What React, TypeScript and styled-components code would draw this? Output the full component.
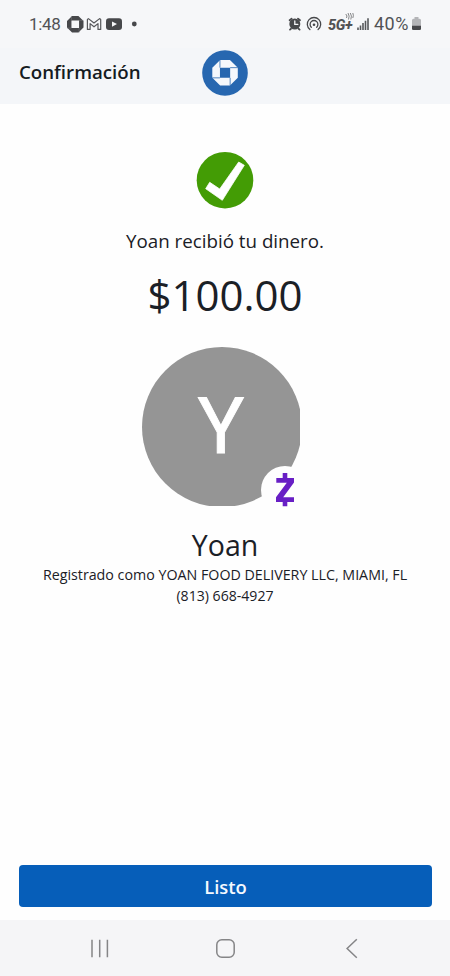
import React from 'react';
import styled, { createGlobalStyle } from 'styled-components';

const Global = createGlobalStyle`
  * { box-sizing: border-box; }
  body { margin: 0; background: #fff; }
  svg { display: block; flex: none; overflow: visible; }
`;

const Screen = styled.div`
  width: 450px;
  height: 976px;
  display: flex;
  flex-direction: column;
  background: #fefefe;
  color: #1b2026;
  font-family: 'Open Sans', 'Noto Sans', sans-serif;
  overflow: hidden;
`;

const StatusBar = styled.div`
  height: 48px;
  flex: none;
  display: flex;
  justify-content: space-between;
  padding: 0 28px 0 29px;
  background: #f6f7f9;
  color: #515255;
`;

const StatusGroup = styled.div`
  display: flex;
  align-items: center;
`;

const StatusText = styled.span<{ $size: number; $width: number; $spacing?: number }>`
  width: ${p => p.$width}px;
  font: 400 ${p => p.$size}px/20px Roboto, sans-serif;
  letter-spacing: ${p => p.$spacing ?? 0}px;
  white-space: nowrap;
`;

const NetworkLabel = styled.span`
  width: 28px;
  margin-left: 4px;
  padding-top: 4px;
  display: flex;
  font: italic 800 14.5px/18px Roboto, sans-serif;
  letter-spacing: -0.4px;
  position: relative;
`;

const Signal = styled.svg`
  position: absolute;
  left: 17px;
  top: 0;
`;

const Header = styled.header`
  height: 56px;
  flex: none;
  display: grid;
  grid-template-columns: 183px 46px 1fr;
  padding: 2px 0 0 19px;
  background: #f4f6f9;
`;

const Title = styled.h1`
  margin: 0;
  font-size: 18.7px;
  font-weight: 600;
  line-height: 43px;
  color: #151b22;
`;

const Main = styled.main`
  flex: 1;
  display: flex;
  flex-direction: column;
  align-items: center;
  padding-top: 48px;
`;

const Line = styled.div<{ $size: number; $height: number; $top?: number }>`
  margin-top: ${p => p.$top ?? 0}px;
  font-size: ${p => p.$size}px;
  line-height: ${p => p.$height}px;
  white-space: nowrap;
`;

const Avatar = styled.div`
  width: 158px;
  height: 159px;
  margin: 24px 8px 0 0;
  position: relative;
`;

const Disc = styled.div`
  width: 158px;
  height: 159px;
  overflow: hidden;
`;

const DiscFill = styled.div`
  width: 160px;
  height: 160px;
  padding-right: 2px;
  border-radius: 50%;
  background: #959595;
  color: #fff;
  text-align: center;
  font: 400 78px/160px Roboto, sans-serif;
  -webkit-text-stroke: 0.8px #fff;
`;

const Badge = styled.div`
  position: absolute;
  left: 119px;
  top: 119px;
  width: 48px;
  height: 48px;
  border-radius: 50%;
  background: #fefefe;
  display: flex;
  align-items: center;
  justify-content: center;
`;

const Footer = styled.div`
  flex: none;
  padding: 0 18px 13px 19px;
`;

const DoneButton = styled.button`
  display: block;
  width: 100%;
  height: 42px;
  padding: 0;
  border: 0;
  border-radius: 4px;
  background: #065eb9;
  color: #f4f9ff;
  font: 600 18.4px/43px 'Open Sans', sans-serif;
`;

const NavBar = styled.nav`
  height: 56px;
  flex: none;
  display: grid;
  grid-template-columns: 125px 130px 13px;
  padding: 18px 0 0 90px;
  background: #f5f5f7;
`;

// Four interlocking blocks around a square opening; each seam runs outward from one corner.
const Octagon = ({ size, fill, gap, inset }: { size: number; fill: string; gap: string; inset: number }) => {
  const a = inset;
  const b = 26 - inset;
  return (
    <svg width={size} height={size} viewBox="0 0 26 26">
      <path fill={fill} fillRule="evenodd" d={`M8 0H18L26 8V18L18 26H8L0 18V8ZM${a} ${a}V${b}H${b}V${a}Z`} />
      <path stroke={gap} strokeWidth="0.8" fill="none" d={`M${a} 0V${a}M${b} ${a}H26M${b} ${b}V26M0 ${b}H${a}`} />
    </svg>
  );
};

const BrandMark = () => (
  <svg width="46" height="46" viewBox="0 0 46 46">
    <circle cx="23" cy="23" r="22.8" fill="#2767b0" />
    <g transform="translate(10.3 10)">
      <Octagon size={25.5} fill="#f5f8fc" gap="#2767b0" inset={7.8} />
    </g>
  </svg>
);

export default function App() {
  return (
    <Screen>
      <Global />
      <StatusBar>
        <StatusGroup>
          <StatusText $size={17} $width={37.5} $spacing={-0.3}>1:48</StatusText>
          <Octagon size={16.5} fill="#47484b" gap="#77787b" inset={7} />
          <svg width="53" height="16" viewBox="0 0 53 16">
            <path d="M4.4 13.4V3.4L5.4 2.6L11 7L16.6 2.6L17.7 3.4V13.4H15V7.6L11 10.8L7.1 7.6V13.4Z" fill="none" stroke="#56575a" strokeWidth="1.2" strokeLinejoin="round" />
            <rect x="23" y="2.3" width="16" height="11.7" rx="3" fill="#47484b" />
            <path d="M29 5.4L34 8.1L29 10.8Z" fill="#f6f7f9" />
            <circle cx="51.3" cy="8" r="2.4" fill="#47484b" />
          </svg>
        </StatusGroup>
        <StatusGroup>
          <svg width="36" height="16" viewBox="0 0 36 16">
            <g stroke="#47484b" fill="none" strokeLinecap="round">
              <circle cx="6.8" cy="8" r="5.5" fill="#47484b" stroke="none" />
              <path d="M1.6 4.2L3.6 2.6M10 2.6L12 4.2M3 12.8L2 13.6M10.6 12.8L11.6 13.6" strokeWidth="1.8" />
              <path d="M6.8 5V8.4H9.8" stroke="#f6f7f9" strokeWidth="1.3" />
              <path d="M21.9 13.5A6.7 6.7 0 1 1 30.1 13.5M23.3 11.2A3.9 3.9 0 1 1 28.7 11.2" strokeWidth="1.3" />
              <circle cx="26" cy="8.8" r="1.3" fill="#47484b" stroke="none" />
            </g>
          </svg>
          <NetworkLabel>
            5G+
            <Signal width="9" height="7" viewBox="0 0 9 7">
              <path d="M.8 1Q2.8 3 1.5 5M3 0Q5 3 3.5 6.5M5.3 0Q7.3 3 5.8 6.5M7.8 0Q9 2.5 7.8 5" fill="none" stroke="#77787b" strokeWidth="0.9" />
            </Signal>
          </NetworkLabel>
          <svg width="18" height="16" viewBox="0 0 18 16">
            <path d="M2 14V11.5M4.5 14V9.5M7 14V7M9.5 14V4.8M12 14V2.3" stroke="#56575a" strokeWidth="1.6" />
          </svg>
          <StatusText $size={18} $width={38} $spacing={0.5}>40%</StatusText>
          <svg width="10" height="16" viewBox="0 0 10 16">
            <path d="M2.5 1H6.5V2.8H7.5Q9 2.8 9 4.3V12.5Q9 14 7.5 14H1.5Q0 14 0 12.5V4.3Q0 2.8 1.5 2.8H2.5Z" fill="#b4b5b8" />
            <path d="M0 9.7H9V12.5Q9 14 7.5 14H1.5Q0 14 0 12.5Z" fill="#47484b" />
          </svg>
        </StatusGroup>
      </StatusBar>
      <Header>
        <Title>Confirmación</Title>
        <BrandMark />
      </Header>
      <Main>
        <svg width="58" height="58" viewBox="0 0 58 58">
          <circle cx="29" cy="28.2" r="28.3" fill="#439c05" />
          <path d="M42.7 10L48.3 13.3L26.3 48.3L9.7 36.7L13.7 30.3L23.7 37Z" fill="#fff" stroke="#fff" strokeWidth="0.8" strokeLinejoin="round" />
        </svg>
        <Line $size={18.75} $height={26} $top={18}>Yoan recibió tu dinero.</Line>
        <Line $size={42} $height={57} $top={12}>$100.00</Line>
        <Avatar>
          <Disc><DiscFill>Y</DiscFill></Disc>
          <Badge>
            <svg width="20" height="34" viewBox="0 0 20 34">
              <path d="M7.7 0H12.3V5H19V9.5L8.2 24.2H19V29H12.3V33.3H7.7V29H1V24.2L11.8 9.8H1.3V5H7.7Z" fill="#681fc5" />
            </svg>
          </Badge>
        </Avatar>
        <Line $size={28.5} $height={38} $top={20}>Yoan</Line>
        <Line $size={14.25} $height={20} $top={1}>Registrado como YOAN FOOD DELIVERY LLC, MIAMI, FL</Line>
        <Line $size={14.1} $height={20} $top={1}>(813) 668-4927</Line>
      </Main>
      <Footer><DoneButton>Listo</DoneButton></Footer>
      <NavBar>
        <svg width="20" height="20" viewBox="0 0 20 20">
          <path d="M2 1.8V19.2M9.7 1.8V19.2M17.4 1.8V19.2" stroke="#858587" strokeWidth="1.5" />
        </svg>
        <svg width="20" height="20" viewBox="0 0 20 20">
          <rect x="1.8" y="1.8" width="17.4" height="17.4" rx="5" fill="none" stroke="#858587" strokeWidth="1.5" />
        </svg>
        <svg width="13" height="20" viewBox="0 0 13 20">
          <path d="M11.8 1.3L2.1 10.5L11.8 19.7" fill="none" stroke="#858587" strokeWidth="1.5" />
        </svg>
      </NavBar>
    </Screen>
  );
}
